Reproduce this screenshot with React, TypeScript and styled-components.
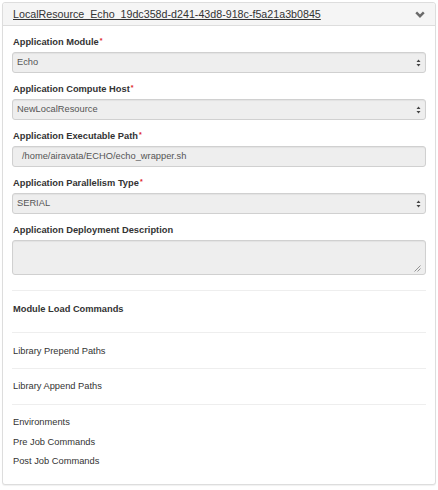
import React from "react";
import styled, { createGlobalStyle } from "styled-components";

const Global = createGlobalStyle`
  html, body { margin: 0; padding: 0; background: #ffffff; }
  body { font-family: "Liberation Sans", Arial, sans-serif; color: #333; }
`;

const Page = styled.div`
  padding: 2px 2px 4px 2px;
  width: 434px;
`;

const Panel = styled.div`
  border: 1px solid #dddddd;
  border-radius: 3px;
  background: #ffffff;
  box-shadow: 0 1px 1px rgba(0, 0, 0, 0.06);
`;

const Header = styled.div`
  display: flex;
  align-items: center;
  justify-content: space-between;
  height: 22px;
  padding: 0 10px 0 10px;
  background: #f5f5f5;
  border-bottom: 1px solid #dddddd;
  border-radius: 3px 3px 0 0;
`;

const Title = styled.a`
  font-size: 10.7px;
  line-height: 22px;
  color: #333;
  text-decoration: underline;
`;

const Body = styled.div`
  padding: 10px 9px 0 9px;
`;

const Group = styled.div`
  margin-bottom: 10px;
`;

const Label = styled.div`
  font-size: 9.3px;
  line-height: 13px;
  font-weight: bold;
  margin-bottom: 3px;
  padding-left: 1px;
`;

const Req = styled.span`
  color: #e0262a;
  font-size: 7px;
  vertical-align: top;
  line-height: 9px;
  margin-left: 1px;
`;

const Field = styled.div<{ $pad: number; $tall?: boolean }>`
  position: relative;
  box-sizing: border-box;
  height: ${(p) => (p.$tall ? "35px" : "21px")};
  background: #eeeeee;
  border: 1px solid #d0d0d0;
  border-radius: 3px;
  box-shadow: inset 0 1px 1px rgba(0, 0, 0, 0.05);
  padding-left: ${(p) => p.$pad}px;
  font-size: 9.3px;
  line-height: 19px;
  color: #555;
`;

const Overlay = styled.svg<{ $bottom?: boolean }>`
  position: absolute;
  right: 4px;
  ${(p) => (p.$bottom ? "bottom: 2px;" : "top: 50%; margin-top: -4px;")}
`;

const Rule = styled.div<{ $top?: number }>`
  height: 1px;
  background: #eeeeee;
  margin-top: ${(p) => p.$top ?? 0}px;
`;

const Section = styled.div<{ $pt: number; $pb: number; $bold?: boolean }>`
  padding: ${(p) => p.$pt}px 0 ${(p) => p.$pb}px 1px;
  font-size: 9.3px;
  line-height: 13px;
  font-weight: ${(p) => (p.$bold ? "bold" : "normal")};
`;

const ListItem = styled.div`
  font-size: 9.3px;
  line-height: 13px;
  margin-bottom: 6.5px;
  &:last-child { margin-bottom: 0; }
`;

const SelectArrows = () => (
  <Overlay width="5" height="8" viewBox="0 0 5 8">
    <path d="M2.5 0.5 L4.5 3 L0.5 3 Z M2.5 7.5 L4.5 5 L0.5 5 Z" fill="#444" />
  </Overlay>
);

const Grip = () => (
  <Overlay $bottom width="7" height="7" viewBox="0 0 7 7">
    <path d="M6.5 0.5 L0.5 6.5 M6.5 3.5 L3.5 6.5" stroke="#888" strokeWidth="0.9" />
  </Overlay>
);

const Chevron = () => (
  <svg width="10" height="7" viewBox="0 0 10 7">
    <path d="M1.2 1.4 L5 5.2 L8.8 1.4" stroke="#6a6a6a" strokeWidth="2.4" fill="none" />
  </svg>
);

type F = { label: string; value: string; kind: "select" | "input" };
const fields: F[] = [
  { label: "Application Module", value: "Echo", kind: "select" },
  { label: "Application Compute Host", value: "NewLocalResource", kind: "select" },
  { label: "Application Executable Path", value: "/home/airavata/ECHO/echo_wrapper.sh", kind: "input" },
  { label: "Application Parallelism Type", value: "SERIAL", kind: "select" },
];

export default function App() {
  return (
    <>
      <Global />
      <Page>
        <Panel>
          <Header>
            <Title>LocalResource_Echo_19dc358d-d241-43d8-918c-f5a21a3b0845</Title>
            <Chevron />
          </Header>
          <Body>
            {fields.map((f) => (
              <Group key={f.label}>
                <Label>
                  {f.label}
                  <Req>*</Req>
                </Label>
                <Field $pad={f.kind === "select" ? 4 : 9}>
                  {f.value}
                  {f.kind === "select" && <SelectArrows />}
                </Field>
              </Group>
            ))}
            <Group>
              <Label>Application Deployment Description</Label>
              <Field $pad={4} $tall>
                <Grip />
              </Field>
            </Group>
            <Rule $top={15} />
            <Section $pt={12} $pb={16} $bold>
              Module Load Commands
            </Section>
            <Rule />
            <Section $pt={12} $pb={10}>
              Library Prepend Paths
            </Section>
            <Rule />
            <Section $pt={11} $pb={11}>
              Library Append Paths
            </Section>
            <Rule />
            <Section $pt={11} $pb={16}>
              <ListItem>Environments</ListItem>
              <ListItem>Pre Job Commands</ListItem>
              <ListItem>Post Job Commands</ListItem>
            </Section>
          </Body>
        </Panel>
      </Page>
    </>
  );
}
